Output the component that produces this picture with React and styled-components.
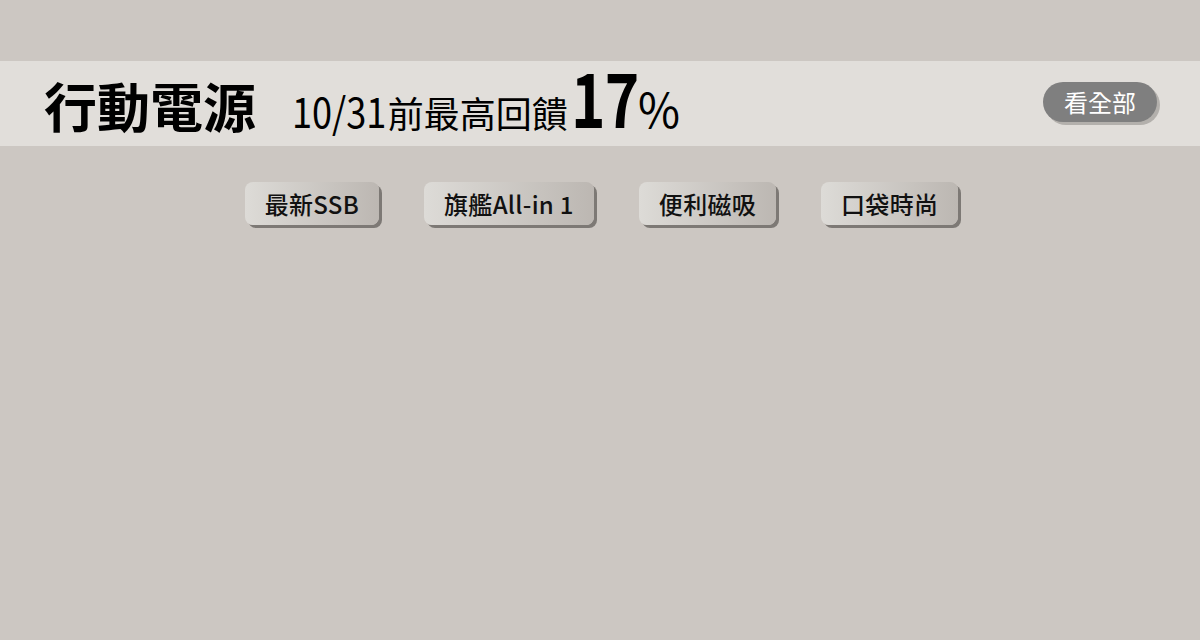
import React from 'react'
import styled, { createGlobalStyle } from 'styled-components'

const GlobalStyle = createGlobalStyle`
  html, body {
    margin: 0;
    padding: 0;
    background: #ccc7c2;
    font-family: "Noto Sans CJK TC", "Noto Sans", sans-serif;
  }
`

const tabs = ['最新SSB', '旗艦All-in 1', '便利磁吸', '口袋時尚']

const App = () => {
  return (
    <Page>
      <GlobalStyle />
      <Band>
        <Headline>
          <Title>行動電源</Title>
          <Promo>
            <Digits>10/31</Digits>前最高回饋<Big>17</Big><Pct>%</Pct>
          </Promo>
        </Headline>
        <SeeAll>看全部</SeeAll>
      </Band>
      <Tabs>
        {tabs.map((t) => (
          <Tab key={t}>{t}</Tab>
        ))}
      </Tabs>
    </Page>
  )
}

export default App

const Page = styled.div`
  width: 1200px;
  height: 640px;
  padding-top: 61px;
  box-sizing: border-box;
`

const Band = styled.div`
  height: 85px;
  background: #e1deda;
  display: flex;
  align-items: center;
  justify-content: space-between;
  padding: 0 43px 0 44px;
  box-sizing: border-box;
`

const Headline = styled.div`
  display: flex;
  align-items: baseline;
  color: #000;
  padding-bottom: 17px;
`

const Title = styled.h1`
  margin: 0 36px 0 0;
  font-size: 53px;
  font-weight: 700;
  line-height: 1;
`

const Promo = styled.div`
  font-size: 36px;
  font-weight: 400;
  line-height: 1;
  display: flex;
  align-items: baseline;
`

const Digits = styled.span`
  display: inline-block;
  font-size: 42px;
  transform: scaleX(0.86);
  transform-origin: left bottom;
  margin-right: -14px;
`

const Big = styled.span`
  display: inline-block;
  font-size: 75px;
  font-weight: 700;
  transform: scaleX(0.78);
  transform-origin: left bottom;
  margin: 0 -19px 0 3px;
  letter-spacing: -1px;
`

const Pct = styled.span`
  display: inline-block;
  font-size: 48px;
  transform: scaleX(0.95);
  transform-origin: left bottom;
`

const SeeAll = styled.div`
  width: 114px;
  height: 40px;
  border-radius: 20px;
  background: #7f7f7f;
  color: #fff;
  font-size: 24px;
  line-height: 40px;
  text-align: center;
  box-shadow: 3px 3px 0 #b3b0ac;
  margin-bottom: 4px;
`

const Tabs = styled.div`
  display: flex;
  justify-content: center;
  gap: 45px;
  padding-top: 36px;
  padding-left: 3px;
`

const Tab = styled.div`
  height: 43px;
  padding: 0 20px;
  border-radius: 8px;
  background: linear-gradient(to right, #dddbd7, #bcb7b2);
  box-shadow: 3px 3px 0 #7d7975;
  color: #111;
  font-size: 24px;
  font-weight: 500;
  line-height: 43px;
  letter-spacing: 0.3px;
  white-space: nowrap;
`
